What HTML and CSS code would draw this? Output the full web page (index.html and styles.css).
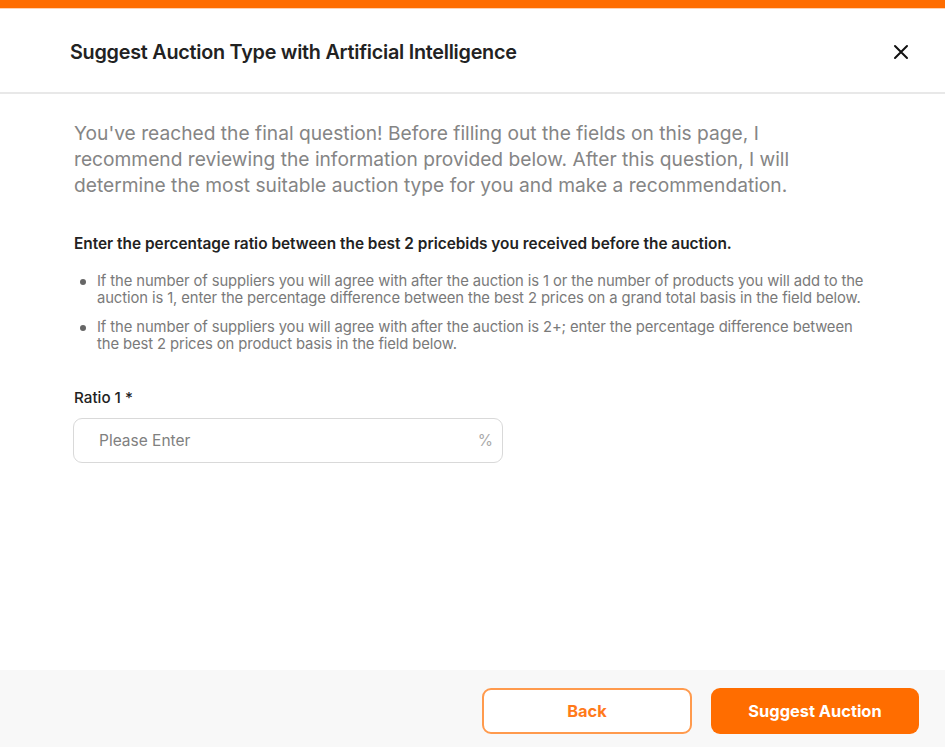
FILE: index.html
```html
<!DOCTYPE html>
<html>
<head>
<meta charset="utf-8">
<link rel="stylesheet" href="styles.css">
</head>
<body>
<div class="modal">
  <div class="topbar"></div>
  <header class="header">
    <h1 class="title">Suggest Auction Type with Artificial Intelligence</h1>
    <button class="close" aria-label="Close">
      <svg width="16" height="16" viewBox="0 0 16 16"><path d="M2 2L14 14M14 2L2 14" stroke="#111" stroke-width="2" stroke-linecap="round"/></svg>
    </button>
  </header>
  <main class="body">
    <p class="intro">You've reached the final question! Before filling out the fields on this page, I recommend reviewing the information provided below. After this question, I will determine the most suitable auction type for you and make a recommendation.</p>
    <p class="question">Enter the percentage ratio between the best 2 pricebids you received before the auction.</p>
    <ul class="notes">
      <li>If the number of suppliers you will agree with after the auction is 1 or the number of products you will add to the auction is 1, enter the percentage difference between the best 2 prices on a grand total basis in the field below.</li>
      <li>If the number of suppliers you will agree with after the auction is 2+; enter the percentage difference between the best 2 prices on product basis in the field below.</li>
    </ul>
    <div class="field">
      <label class="label">Ratio 1 *</label>
      <div class="input">
        <span class="placeholder">Please Enter</span>
        <span class="suffix">%</span>
      </div>
    </div>
  </main>
  <footer class="footer">
    <button class="btn btn-outline">Back</button>
    <button class="btn btn-primary">Suggest Auction</button>
  </footer>
</div>
</body>
</html>
```
FILE: styles.css
```css
* { box-sizing: border-box; }
html, body { margin: 0; padding: 0; }
body {
  font-family: Inter, "Noto Sans", sans-serif;
  background: #fff;
  width: 945px;
  height: 747px;
  overflow: hidden;
}
.modal {
  display: flex;
  flex-direction: column;
  height: 747px;
}
.topbar {
  height: 9px;
  background: #ff6d00;
  border-bottom: 1px solid #ffd2b0;
}
.header {
  height: 85px;
  display: flex;
  align-items: center;
  justify-content: space-between;
  padding: 3px 36px 0 70px;
  border-bottom: 2px solid #e8e8e8;
}
.title {
  margin: 0;
  font-size: 19.8px;
  font-weight: 600;
  color: #222;
  letter-spacing: -0.25px;
}
.close {
  border: none;
  background: none;
  padding: 0;
  width: 16px;
  height: 16px;
  display: flex;
}
.body {
  flex: 1;
  padding: 26px 70px 0 74px;
}
.intro {
  margin: 0;
  font-size: 19.2px;
  line-height: 26px;
  color: #858585;
  width: 760px;
}
.question {
  margin: 36px 0 0;
  font-size: 15.4px;
  line-height: 20px;
  font-weight: 600;
  color: #222;
}
.notes {
  list-style: none;
  margin: 18.5px 0 0;
  padding: 0 0 0 23px;
}
.notes li {
  position: relative;
  font-size: 14.8px;
  line-height: 17px;
  color: #7a7a7a;
  margin-bottom: 12px;
  width: 780px;
  letter-spacing: -0.1px;
}
.notes li::before {
  content: "";
  position: absolute;
  left: -17px;
  top: 6px;
  width: 6px;
  height: 6px;
  border-radius: 50%;
  background: #666;
}
.field {
  margin-top: 35px;
}
.label {
  display: block;
  font-size: 15.2px;
  line-height: 20px;
  font-weight: 500;
  color: #222;
}
.input {
  margin-top: 10px;
  width: 430px;
  height: 45px;
  border: 1px solid #d9d9d9;
  border-radius: 9px;
  display: flex;
  align-items: center;
  justify-content: space-between;
  padding: 0 9px 0 25px;
  margin-left: -1px;
}
.placeholder {
  font-size: 15.5px;
  color: #808080;
}
.suffix {
  font-size: 15.5px;
  color: #aaa;
}
.footer {
  height: 77px;
  background: #f8f8f8;
  display: flex;
  align-items: center;
  justify-content: flex-end;
  gap: 19px;
  padding: 4px 26px 0 0;
}
.btn {
  width: 210px;
  height: 46px;
  border-radius: 9px;
  font-family: Inter, "Noto Sans", sans-serif;
  font-size: 16.4px;
  font-weight: 700;
  cursor: pointer;
}
.btn-outline {
  background: #fff;
  border: 2px solid #ff9a4d;
  color: #ff7a1a;
}
.btn-primary {
  width: 208px;
  background: #ff6d00;
  border: none;
  color: #fff;
}
```
